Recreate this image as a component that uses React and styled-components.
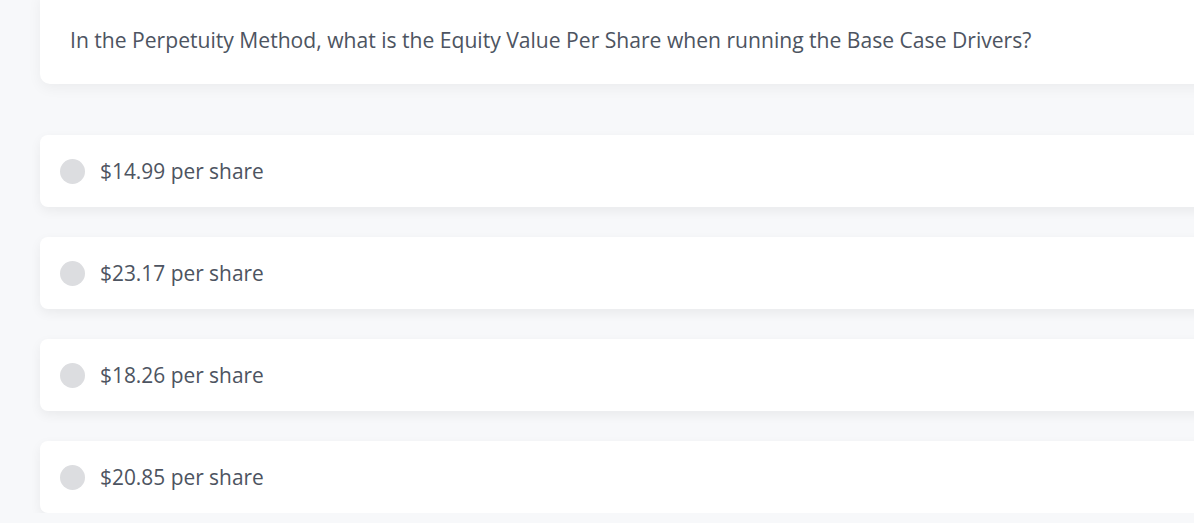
import React from "react";
import styled, { createGlobalStyle } from "styled-components";

const GlobalStyle = createGlobalStyle`
  html, body {
    margin: 0;
    padding: 0;
    background: #f7f8fa;
    overflow: hidden;
  }
  body {
    font-family: "Open Sans", "Noto Sans", sans-serif;
  }
`;

const Page = styled.div`
  padding-left: 40px;
  width: 1200px;
`;

const QuestionCard = styled.div`
  margin-top: -6px;
  height: 90px;
  box-sizing: border-box;
  display: flex;
  align-items: center;
  padding: 0 30px 0;
  background: #fff;
  border-radius: 0 0 10px 10px;
  box-shadow: 0 4px 14px rgba(0, 0, 0, 0.05);
  color: #4d5461;
  font-size: 21.1px;
`;

const Options = styled.ul`
  list-style: none;
  margin: 51px 0 0;
  padding: 0;
  display: flex;
  flex-direction: column;
  gap: 30px;
`;

const Option = styled.li`
  height: 72px;
  box-sizing: border-box;
  display: flex;
  align-items: center;
  gap: 15px;
  padding-left: 20px;
  background: #fff;
  border-radius: 8px;
  box-shadow: 0 4px 12px rgba(0, 0, 0, 0.06);
  color: #4d5461;
  font-size: 20.9px;
  cursor: pointer;
`;

const Radio = styled.span`
  width: 25px;
  height: 25px;
  border-radius: 50%;
  background: #dcdde0;
  flex-shrink: 0;
`;

const answers = [
  "$14.99 per share",
  "$23.17 per share",
  "$18.26 per share",
  "$20.85 per share",
];

export default function App() {
  return (
    <>
      <GlobalStyle />
      <Page>
        <QuestionCard>
          In the Perpetuity Method, what is the Equity Value Per Share when
          running the Base Case Drivers?
        </QuestionCard>
        <Options>
          {answers.map((a) => (
            <Option key={a}>
              <Radio />
              {a}
            </Option>
          ))}
        </Options>
      </Page>
    </>
  );
}
